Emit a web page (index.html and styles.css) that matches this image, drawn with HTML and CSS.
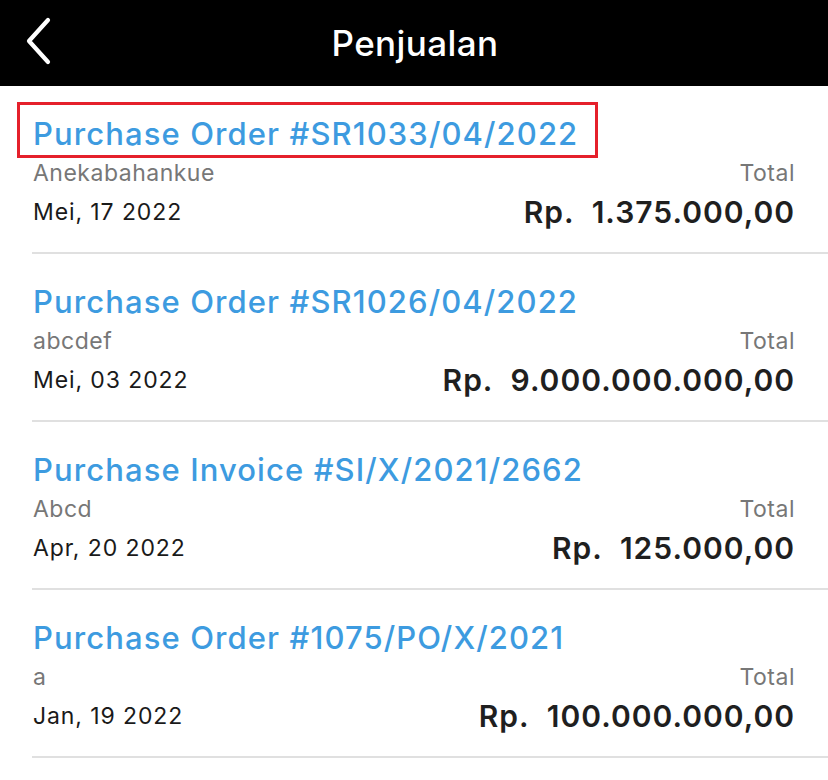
FILE: index.html
```html
<!DOCTYPE html>
<html>
<head>
<meta charset="utf-8">
<link rel="stylesheet" href="styles.css">
</head>
<body>
<header class="bar">
  <svg class="back" width="28" height="48" viewBox="0 0 28 48"><path d="M23 3 L4 24 L23 45" fill="none" stroke="#fff" stroke-width="4.2" stroke-linecap="round" stroke-linejoin="round"/></svg>
  <h1 class="bar-title">Penjualan</h1>
</header>
<main class="list">
  <div class="row">
    <div class="title hl">Purchase Order #SR1033/04/2022</div>
    <div class="line sub-line"><span class="sub">Anekabahankue</span><span class="sub">Total</span></div>
    <div class="line main-line"><span class="date">Mei, 17 2022</span><span class="amount">Rp.&nbsp; 1.375.000,00</span></div>
  </div>
  <div class="row">
    <div class="title">Purchase Order #SR1026/04/2022</div>
    <div class="line sub-line"><span class="sub">abcdef</span><span class="sub">Total</span></div>
    <div class="line main-line"><span class="date">Mei, 03 2022</span><span class="amount">Rp.&nbsp; 9.000.000.000,00</span></div>
  </div>
  <div class="row">
    <div class="title">Purchase Invoice #SI/X/2021/2662</div>
    <div class="line sub-line"><span class="sub">Abcd</span><span class="sub">Total</span></div>
    <div class="line main-line"><span class="date">Apr, 20 2022</span><span class="amount">Rp.&nbsp; 125.000,00</span></div>
  </div>
  <div class="row">
    <div class="title">Purchase Order #1075/PO/X/2021</div>
    <div class="line sub-line"><span class="sub">a</span><span class="sub">Total</span></div>
    <div class="line main-line"><span class="date">Jan, 19 2022</span><span class="amount">Rp.&nbsp; 100.000.000,00</span></div>
  </div>
</main>
</body>
</html>
```
FILE: styles.css
```css
* { box-sizing: border-box; }
html, body { margin: 0; padding: 0; background: #fff; }
body { font-family: Inter, "Noto Sans", sans-serif; width: 828px; height: 780px; overflow: hidden; }
.bar {
  height: 86px; background: #000; position: relative;
  display: flex; align-items: center; justify-content: center;
}
.back { position: absolute; left: 25px; top: 17px; }
.bar-title { margin: 0 0 0 2px; color: #fff; font-size: 35px; font-weight: 500; letter-spacing: 0.4px; line-height: 86px; }
.list { padding-left: 32px; }
.row {
  height: 168px; border-bottom: 2px solid #e0e0e0;
  padding: 30px 33px 0 1px;
  display: flex; flex-direction: column;
}
.title {
  color: #3d9be0; font-size: 31px; font-weight: 500; line-height: 36px; letter-spacing: 1.1px;
  align-self: flex-start; position: relative;
}
.title.hl::after {
  content: ""; position: absolute; left: -16px; top: -14px; right: -20px; bottom: -6px;
  border: 3px solid #e5202b;
}
.line { display: flex; justify-content: space-between; align-items: center; }
.sub-line { margin-top: 7px; height: 28px; }
.main-line { margin-top: 6px; height: 38px; }
.sub { color: #777; font-size: 23px; line-height: 28px; letter-spacing: 0.5px; }
.date { color: #1a1a1a; font-size: 23px; letter-spacing: 0.9px; }
.amount { color: #1f1f1f; font-size: 30px; font-weight: 600; line-height: 38px; letter-spacing: 1px; }
```
